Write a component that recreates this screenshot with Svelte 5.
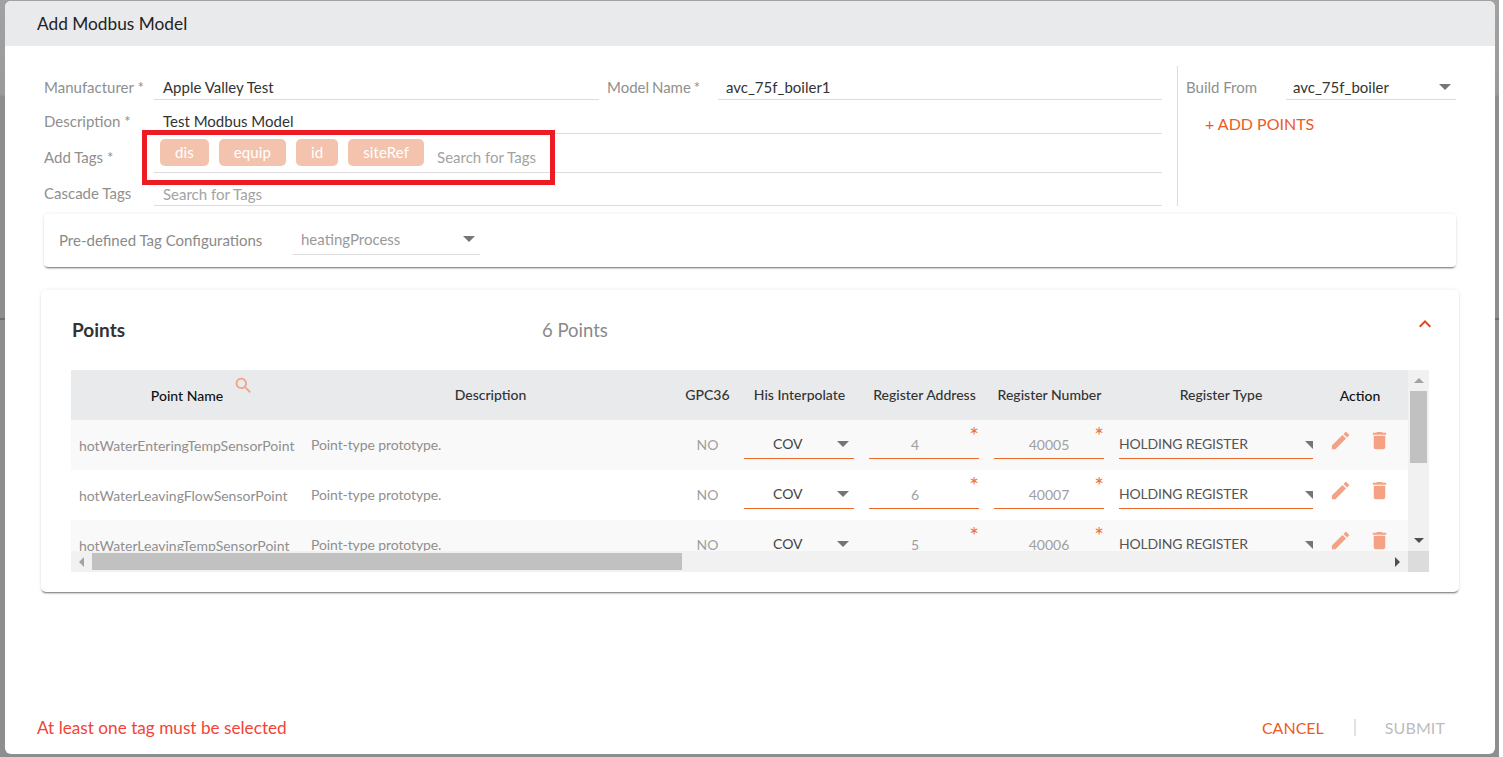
<script>
  const tags = ['dis', 'equip', 'id', 'siteRef'];

  const points = [
    { name: 'hotWaterEnteringTempSensorPoint', address: 4, number: 40005 },
    { name: 'hotWaterLeavingFlowSensorPoint', address: 6, number: 40007 },
    { name: 'hotWaterLeavingTempSensorPoint', address: 5, number: 40006 },
  ];
</script>

<div class="backdrop">
  <div class="modal">
    <header class="modal-head">Add Modbus Model</header>

    <section class="top">
      <div class="fields">
        <div class="row row-a">
          <div class="field half">
            <span class="label">Manufacturer *</span>
            <span class="input">Apple Valley Test</span>
          </div>
          <div class="field half second">
            <span class="label">Model Name *</span>
            <span class="input">avc_75f_boiler1</span>
          </div>
        </div>
        <div class="row row-b">
          <div class="field">
            <span class="label">Description *</span>
            <span class="input">Test Modbus Model</span>
          </div>
        </div>
        <div class="row row-c">
          <div class="field">
            <span class="label">Add Tags *</span>
            <div class="input tags">
              {#each tags as tag}
                <span class="chip">{tag}</span>
              {/each}
              <span class="placeholder search-after">Search for Tags</span>
            </div>
          </div>
          <div class="highlight"></div>
        </div>
        <div class="row row-d">
          <div class="field">
            <span class="label">Cascade Tags</span>
            <span class="input placeholder">Search for Tags</span>
          </div>
        </div>
      </div>

      <aside class="build">
        <div class="build-row">
          <span class="build-label">Build From</span>
          <div class="select build-select">
            <span>avc_75f_boiler</span>
            <i class="caret"></i>
          </div>
        </div>
        <div class="add-points">+ ADD POINTS</div>
      </aside>
    </section>

    <div class="config-card">
      <span class="config-label">Pre-defined Tag Configurations</span>
      <div class="select config-select">
        <span>heatingProcess</span>
        <i class="caret"></i>
      </div>
    </div>

    <section class="points-card">
      <div class="points-head">
        <h2>Points</h2>
        <span class="count">6 Points</span>
        <svg class="chevron" viewBox="0 0 24 24" width="24" height="24">
          <path d="M12 8l-6 6 1.41 1.41L12 10.83l4.59 4.58L18 14z" />
        </svg>
      </div>

      <div class="table-wrap">
        <div class="table-view">
          <div class="tr th">
            <div class="c-name dark">
              Point Name
              <svg class="search" viewBox="0 0 24 24" width="21" height="21">
                <path d="M15.5 14h-.79l-.28-.27C15.41 12.59 16 11.11 16 9.5 16 5.91 13.09 3 9.5 3S3 5.91 3 9.5 5.91 16 9.5 16c1.61 0 3.09-.59 4.23-1.57l.27.28v.79l5 4.99L20.49 19l-4.99-5zm-6 0C7.01 14 5 11.99 5 9.5S7.01 5 9.5 5 14 7.01 14 9.5 11.99 14 9.5 14z" />
              </svg>
            </div>
            <div>Description</div>
            <div>GPC36</div>
            <div>His Interpolate</div>
            <div>Register Address</div>
            <div>Register Number</div>
            <div class="c-type">Register Type</div>
            <div class="c-action dark">Action</div>
          </div>

          {#each points as p, i}
            <div class="tr td" class:odd={i % 2 === 0}>
              <div class="point-name">{p.name}</div>
              <div class="point-desc">Point-type prototype.</div>
              <div class="gpc">NO</div>
              <div class="cell-pad">
                <div class="under cov">
                  <span>COV</span>
                  <i class="caret"></i>
                </div>
              </div>
              <div class="cell-pad">
                <div class="under num addr">
                  <span>{p.address}</span>
                  <b class="star">*</b>
                </div>
              </div>
              <div class="cell-pad">
                <div class="under num">
                  <span>{p.number}</span>
                  <b class="star">*</b>
                </div>
              </div>
              <div class="cell-pad wide">
                <div class="under reg">
                  <span>HOLDING REGISTER</span>
                  <i class="corner"></i>
                </div>
              </div>
              <div class="actions">
                <svg viewBox="0 0 24 24" width="23" height="23">
                  <path d="M3 17.25V21h3.75L17.81 9.94l-3.75-3.75L3 17.25zM20.71 7.04c.39-.39.39-1.02 0-1.41l-2.34-2.34c-.39-.39-1.02-.39-1.41 0l-1.83 1.83 3.75 3.75 1.83-1.83z" />
                </svg>
                <svg viewBox="0 0 24 24" width="23" height="23">
                  <path d="M6 19c0 1.1.9 2 2 2h8c1.1 0 2-.9 2-2V7H6v12zM19 4h-3.5l-1-1h-5l-1 1H5v2h14V4z" />
                </svg>
              </div>
            </div>
          {/each}
        </div>

        <div class="vbar">
          <i class="arrow up"></i>
          <div class="vthumb"></div>
          <i class="arrow down"></i>
        </div>
        <div class="hbar">
          <i class="arrow left"></i>
          <div class="hthumb"></div>
          <i class="arrow right"></i>
        </div>
        <div class="sb-corner"></div>
      </div>
    </section>

    <footer class="modal-foot">
      <span class="error">At least one tag must be selected</span>
      <div class="foot-actions">
        <span class="cancel">CANCEL</span>
        <span class="sep"></span>
        <span class="submit">SUBMIT</span>
      </div>
    </footer>
  </div>
</div>

<style>
  :global(body) {
    margin: 0;
    background: #fff;
    font-family: Lato, "Open Sans", sans-serif;
  }

  .backdrop {
    box-sizing: border-box;
    width: 1499px;
    height: 757px;
    padding: 1px 4px 3px 5px;
    background: linear-gradient(180deg, #a2a2a2 0, #9a9a9a 95px, #8e8e8e 96px, #8e8e8e 318px, #6f6f6f 318px, #6f6f6f 320px, #8e8e8e 320px);
  }

  .modal {
    display: flex;
    flex-direction: column;
    height: 100%;
    background: #fff;
    border-radius: 6px;
    overflow: hidden;
  }

  .modal-head {
    flex: none;
    height: 45px;
    padding-left: 32px;
    line-height: 45px;
    font-size: 17.3px;
    color: #222;
    background: #e9eaec;
  }

  /* Top form */
  .top {
    display: flex;
    flex: none;
    margin: 20px 39px 0;
    height: 140px;
  }

  .fields {
    width: 1118px;
  }

  .row {
    display: flex;
    gap: 9px;
    position: relative;
  }

  .row-a, .row-b { height: 34px; }
  .row-c { height: 39px; }
  .row-d { height: 33px; }

  .field {
    display: flex;
    flex: 1;
    min-width: 0;
  }

  .label {
    flex: none;
    box-sizing: border-box;
    width: 110px;
    align-self: flex-end;
    padding-bottom: 2px;
    line-height: 20px;
    font-size: 15px;
    color: #8f8f8f;
  }

  .row-a .label, .row-b .label { padding-bottom: 2px; margin-bottom: 1px; }
  .row-c .label { padding-bottom: 6px; }
  .row-d .label { padding-bottom: 3px; }

  .second { margin-left: -1px; }
  .second .label { width: 111px; word-spacing: -1px; }
  .second .input { padding-left: 8px; }

  .input {
    flex: 1;
    display: flex;
    align-items: flex-end;
    padding: 0 0 2px 9px;
    line-height: 20px;
    font-size: 15px;
    color: #333;
    border-bottom: 1px solid #dcdcdc;
  }

  .row-d .input { padding-bottom: 1px; }

  .placeholder {
    color: #a3a3a3;
  }

  .tags {
    gap: 10px;
    padding: 5px 0 6px 6px;
    align-items: flex-start;
  }

  .chip {
    height: 27px;
    line-height: 27px;
    padding: 0 15px;
    font-size: 15px;
    letter-spacing: 0.1px;
    color: #fff;
    background: #f4c3ae;
    border-radius: 5px;
  }

  .search-after {
    margin: 8px 0 0 3px;
    line-height: 20px;
  }

  .highlight {
    position: absolute;
    left: 98px;
    top: -4px;
    width: 403px;
    height: 45px;
    border: 5px solid #ed1c24;
    pointer-events: none;
  }

  .build {
    margin-left: 15px;
    padding-left: 8px;
    width: 270px;
    border-left: 1px solid #dcdcdc;
  }

  .build-row {
    display: flex;
    height: 34px;
    align-items: flex-end;
  }

  .build-label {
    width: 100px;
    padding-bottom: 3px;
    line-height: 20px;
    font-size: 15px;
    color: #8f8f8f;
  }

  .select {
    display: flex;
    align-items: center;
    justify-content: space-between;
    box-sizing: border-box;
    font-size: 15px;
    border-bottom: 1px solid #dcdcdc;
  }

  .build-select {
    width: 170px;
    height: 29px;
    padding: 4px 5px 0 7px;
    color: #333;
  }

  .caret {
    display: block;
    flex: none;
    width: 0;
    height: 0;
    border-left: 6px solid transparent;
    border-right: 6px solid transparent;
    border-top: 6px solid #757575;
  }

  .add-points {
    margin: 14px 0 0 19px;
    line-height: 20px;
    font-size: 16px;
    color: #ee5a24;
  }

  /* Pre-defined configuration */
  .config-card {
    flex: none;
    display: flex;
    align-items: flex-start;
    box-sizing: border-box;
    height: 53px;
    margin: 8px 39px 0;
    padding-left: 15px;
    background: #fff;
    border-radius: 4px;
    box-shadow: 0 2px 2px -1px rgba(0, 0, 0, 0.55), 0 0 4px rgba(0, 0, 0, 0.08);
  }

  .config-label {
    width: 234px;
    margin-top: 16px;
    line-height: 20px;
    font-size: 15px;
    color: #8a8a8a;
  }

  .config-select {
    width: 187px;
    height: 41px;
    padding: 9px 5px 0 8px;
    font-size: 15px;
    color: #9a9a9a;
  }

  /* Points */
  .points-card {
    flex: none;
    box-sizing: border-box;
    height: 302px;
    margin: 23px 36px 0;
    padding: 0 30px;
    background: #fff;
    border-radius: 5px;
    box-shadow: 0 2px 2px -1px rgba(0, 0, 0, 0.55), 0 0 4px rgba(0, 0, 0, 0.08);
  }

  .points-head {
    display: flex;
    align-items: flex-start;
    height: 80px;
  }

  .points-head h2 {
    width: 470px;
    margin: 29px 0 0 1px;
    line-height: 22px;
    font-size: 19px;
    font-weight: 700;
    color: #333;
  }

  .count {
    margin-top: 29px;
    line-height: 22px;
    font-size: 18.5px;
    color: #8a8a8a;
  }

  .chevron {
    margin: 22px -8px 0 auto;
    fill: #e8431a;
  }

  .table-wrap {
    display: grid;
    grid-template-columns: 1337px 21px;
    grid-template-rows: 181px 21px;
    width: 1358px;
  }

  .table-view {
    overflow: hidden;
  }

  .tr {
    display: grid;
    grid-template-columns: 232px 375px 59px 125px 125px 125px 208px 88px;
    height: 50px;
  }

  .th {
    background: #e9eaec;
    font-size: 14px;
    font-weight: 500;
    color: #333;
    text-align: center;
    line-height: 50px;
  }

  .th .dark {
    color: #111;
    position: relative;
    line-height: 52px;
  }

  .c-type {
    padding-left: 10px;
  }

  .c-action {
    padding-right: 8px;
  }

  .search {
    position: absolute;
    left: 162px;
    top: 5px;
    fill: #f4a283;
  }

  .td {
    align-items: start;
    background: #fff;
    font-size: 14px;
    color: #8f8f8f;
    line-height: 18px;
  }

  .td.odd {
    background: #f9f9f9;
  }

  .point-name {
    padding: 17px 0 0 8px;
    white-space: nowrap;
  }

  .point-desc {
    padding: 16px 0 0 8px;
    letter-spacing: -0.1px;
  }

  .gpc {
    padding-top: 16px;
    text-align: center;
    color: #a0a0a0;
  }

  .cell-pad {
    padding: 0 8px 0 7px;
  }

  .cell-pad.wide {
    padding-right: 7px;
  }

  .under {
    position: relative;
    box-sizing: border-box;
    height: 39px;
    display: flex;
    align-items: flex-end;
    border-bottom: 1px solid #ee6a2c;
  }

  .cov {
    padding: 0 5px 5px 29px;
    justify-content: space-between;
    color: #444;
  }

  .cov .caret {
    margin-bottom: 6px;
  }

  .num {
    justify-content: center;
    padding-bottom: 4px;
    color: #a0a0a0;
  }

  .addr {
    padding-right: 18px;
  }

  .star {
    position: absolute;
    top: 5px;
    right: 0;
    font-size: 23px;
    line-height: 20px;
    font-weight: 400;
    color: #f0733c;
  }

  .reg {
    justify-content: space-between;
    padding: 0 0 5px;
    letter-spacing: -0.18px;
    color: #555;
  }

  .corner {
    display: block;
    width: 8px;
    height: 8px;
    margin: 0 0 4px;
    background: #757575;
    clip-path: polygon(0 0, 100% 0, 100% 100%);
  }

  .actions {
    display: flex;
    gap: 16px;
    padding: 9px 0 0 9px;
    fill: #f4a283;
  }

  /* Scrollbars */
  .vbar, .hbar {
    display: flex;
    background: #f1f1f1;
  }

  .vbar {
    flex-direction: column;
    align-items: center;
  }

  .hbar {
    align-items: center;
  }

  .arrow {
    display: block;
    width: 0;
    height: 0;
    flex: none;
  }

  .up {
    margin-top: 8px;
    border-left: 5px solid transparent;
    border-right: 5px solid transparent;
    border-bottom: 5px solid #a3a3a3;
  }

  .down {
    margin-top: 75px;
    border-left: 5px solid transparent;
    border-right: 5px solid transparent;
    border-top: 5px solid #505050;
  }

  .left {
    margin-left: 8px;
    border-top: 5px solid transparent;
    border-bottom: 5px solid transparent;
    border-right: 5px solid #a3a3a3;
  }

  .right {
    margin-left: auto;
    margin-right: 8px;
    border-top: 5px solid transparent;
    border-bottom: 5px solid transparent;
    border-left: 5px solid #505050;
  }

  .vthumb {
    width: 17px;
    height: 72px;
    margin-top: 8px;
    background: #c1c1c1;
  }

  .hthumb {
    width: 590px;
    height: 17px;
    margin-left: 8px;
    background: #c1c1c1;
  }

  .sb-corner {
    background: #dcdcdc;
  }

  /* Footer */
  .modal-foot {
    flex: 1;
    display: flex;
    align-items: flex-end;
    justify-content: space-between;
    padding: 0 50px 16px 32px;
  }

  .error {
    line-height: 20px;
    font-size: 17.2px;
    color: #f44336;
  }

  .foot-actions {
    display: flex;
    align-items: center;
    height: 22px;
    font-size: 16px;
  }

  .cancel {
    color: #ee5a24;
  }

  .sep {
    width: 2px;
    height: 17px;
    margin: 0 29px 0 30px;
    background: #e2e2e2;
  }

  .submit {
    letter-spacing: 0.1px;
    color: #bdbdbd;
  }
</style>
